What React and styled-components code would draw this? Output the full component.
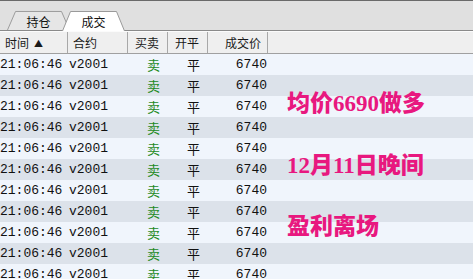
import React from "react";
import styled, { createGlobalStyle } from "styled-components";

const GlobalStyle = createGlobalStyle`
  html, body { margin: 0; padding: 0; background: #f0f5fc; }
  body { width: 473px; height: 279px; overflow: hidden; font-family: "Noto Sans CJK SC", "Liberation Sans", sans-serif; }
`;

const COLS = "68px 60px 40px 40px 60px 1fr";

const Frame = styled.div`
  border-top: 1px solid #6a6a6a;
  width: 473px;
  height: 278px;
  overflow: hidden;
`;

const TabStrip = styled.div`
  height: 29px;
  background: #e0e0e0;
  border-bottom: 1px solid #8a8a8a;
  display: flex;
  align-items: flex-end;
  padding-left: 7px;
`;

const TabWrap = styled.div`
  position: relative;
  width: 63px;
  height: ${(p) => (p.$active ? "20px" : "19px")};
  margin-left: ${(p) => (p.$first ? "0" : "-8px")};
  margin-bottom: ${(p) => (p.$active ? "-1px" : "0")};
  z-index: ${(p) => (p.$active ? 2 : 1)};
  display: flex;
  align-items: center;
  justify-content: center;
  font-size: 12px;
  color: #111;
`;

const TabShape = styled.svg`
  position: absolute;
  left: 0;
  top: 0;
  width: 100%;
  height: 100%;
  overflow: visible;
`;

const TabLabel = styled.span`
  position: relative;
  line-height: 17px;
  padding-top: 1px;
`;

function Tab({ label, active, first }) {
  return (
    <TabWrap $active={active} $first={first}>
      <TabShape viewBox="0 0 63 20" preserveAspectRatio="none">
        <polygon
          points="0.5,20 8.5,0.5 54.5,0.5 62.5,20"
          fill={active ? "#ffffff" : "#e6e6e6"}
          stroke="none"
        />
        <polyline
          points="0.5,20 8.5,0.5 54.5,0.5 62.5,20"
          fill="none"
          stroke="#9a9a9a"
          strokeWidth="1"
        />
      </TabShape>
      <TabLabel>{label}</TabLabel>
    </TabWrap>
  );
}

const Header = styled.div`
  display: grid;
  grid-template-columns: ${COLS};
  height: 21px;
  background: #efefef;
  border-top: 1px solid #fbfbfb;
  border-bottom: 1px solid #a0a0a0;
`;

const HeadCell = styled.div`
  box-sizing: border-box;
  border-right: ${(p) => (p.$last ? "none" : "1px solid #a8a8a8")};
  font-size: 12px;
  color: #1a1a1a;
  line-height: 21px;
  padding-left: ${(p) => p.$pl || 0}px;
  padding-right: ${(p) => p.$pr || 0}px;
  text-align: ${(p) => p.$align || "left"};
  white-space: nowrap;
  overflow: hidden;
`;

const Arrow = styled.span`
  font-size: 9px;
  margin-left: 5px;
  position: relative;
  top: -1px;
`;

const Body = styled.div`
  position: relative;
`;

const Row = styled.div`
  display: grid;
  grid-template-columns: ${COLS};
  height: 21px;
  background: ${(p) => (p.$alt ? "#dce2ea" : "#f0f5fc")};
`;

const Cell = styled.div`
  line-height: 21px;
  white-space: nowrap;
  overflow: hidden;
  font-family: ${(p) => (p.$cjk ? '"Noto Sans CJK SC", sans-serif' : '"Liberation Mono", monospace')};
  font-size: 13px;
  color: ${(p) => p.$color || "#111"};
  text-align: ${(p) => p.$align || "left"};
  padding-left: ${(p) => p.$pl || 0}px;
  padding-right: ${(p) => p.$pr || 0}px;
`;

const Note = styled.div`
  position: absolute;
  left: 287px;
  top: ${(p) => p.$top}px;
  font-family: "Liberation Serif", "Noto Sans CJK SC", serif;
  font-weight: 900;
  font-size: 23px;
  line-height: 23px;
  color: #e8187f;
  white-space: nowrap;
`;

const rows = Array.from({ length: 11 }, (_, i) => i);

export default function App() {
  return (
    <>
      <GlobalStyle />
      <Frame>
        <TabStrip>
          <Tab label="持仓" first />
          <Tab label="成交" active />
        </TabStrip>
        <Header>
          <HeadCell $pl={5}>
            时间<Arrow>▲</Arrow>
          </HeadCell>
          <HeadCell $pl={5}>合约</HeadCell>
          <HeadCell $pl={7}>买卖</HeadCell>
          <HeadCell $pl={7}>开平</HeadCell>
          <HeadCell $align="right" $pr={6}>成交价</HeadCell>
          <HeadCell $last />
        </Header>
        <Body>
          {rows.map((i) => (
            <Row key={i} $alt={i % 2 === 1}>
              <Cell>21:06:46</Cell>
              <Cell $pl={1}>v2001</Cell>
              <Cell $cjk $color="#1d8a1d" $pl={19}>卖</Cell>
              <Cell $cjk $pl={19}>平</Cell>
              <Cell $align="right" $pr={1}>6740</Cell>
              <Cell />
            </Row>
          ))}
          <Note $top={38}>均价6690做多</Note>
          <Note $top={100}>12月11日晚间</Note>
          <Note $top={161}>盈利离场</Note>
        </Body>
      </Frame>
    </>
  );
}
